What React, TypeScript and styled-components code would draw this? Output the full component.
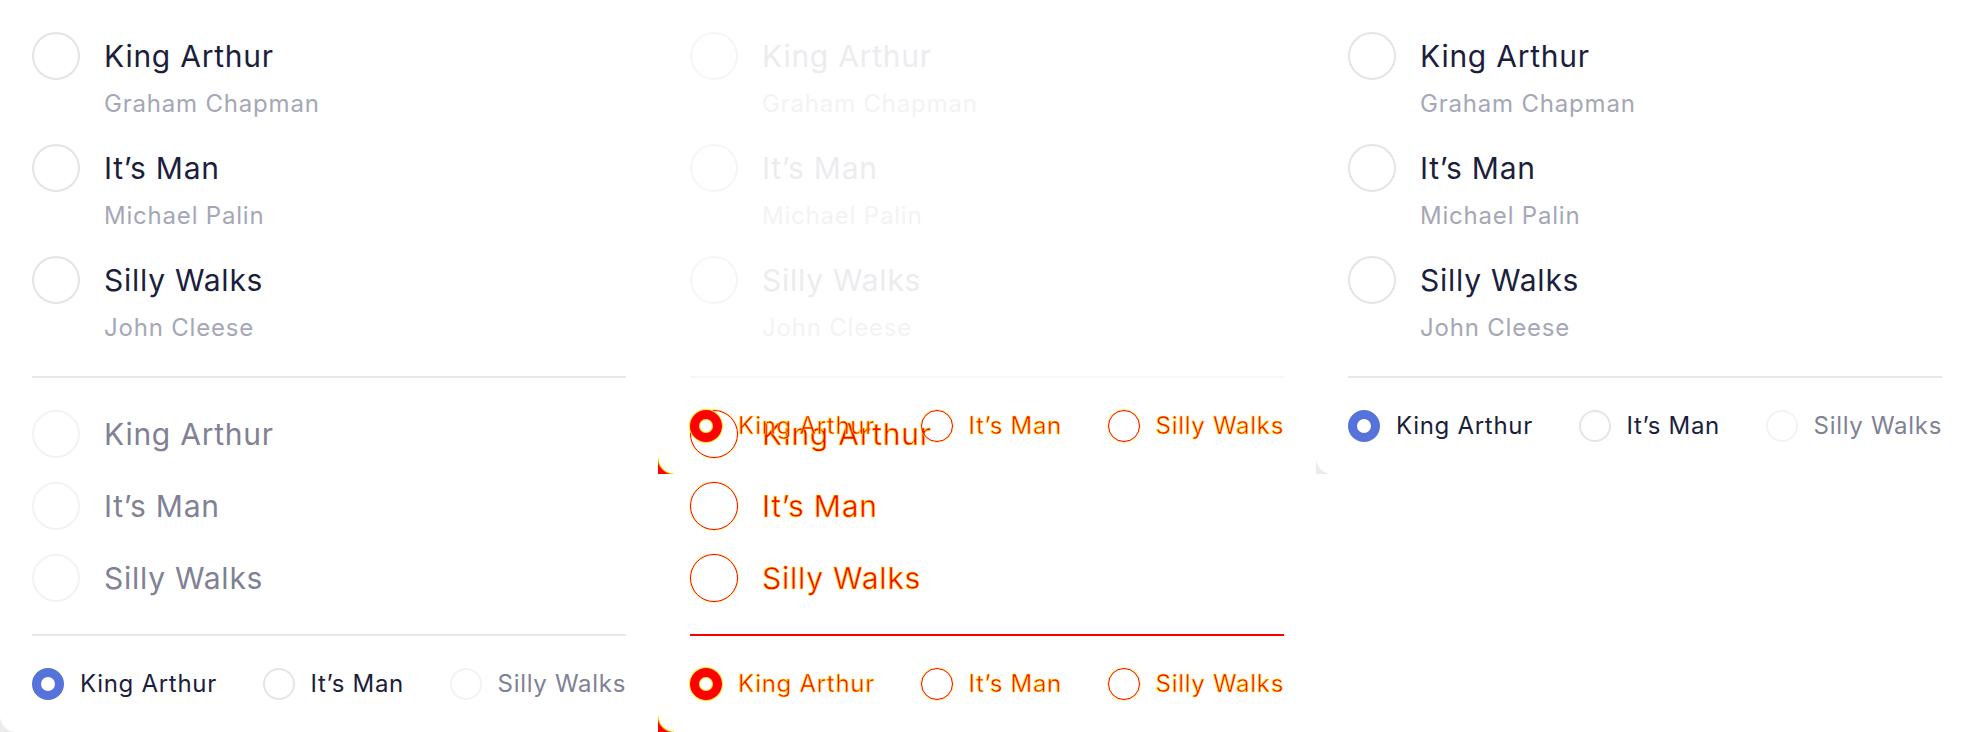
import React from "react";
import styled, { createGlobalStyle, css } from "styled-components";

type Tone = "normal" | "ghost" | "diff" | "hidden";
type State = "off" | "on" | "dis";

const GlobalStyle = createGlobalStyle`
  html, body { margin: 0; padding: 0; background: #ffffff; }
  body { font-family: Inter, "Noto Sans", sans-serif; }
  * { box-sizing: border-box; }
`;

const RED = "#ff0000";
const YELLOW = "#ffee00";

const palette = {
  normal: {
    title: "#1b1e3c",
    desc: "#a5a7b7",
    muted: "#7f8195",
    ring: "#e5e5e8",
    ringDis: "#f3f3f5",
    on: "#5672db",
    sep: "#e7e7ea",
  },
  ghost: {
    title: "#ececef",
    desc: "#f3f3f5",
    muted: "#ececef",
    ring: "#f6f6f7",
    ringDis: "#fafafa",
    on: "#eef0fb",
    sep: "#f7f7f8",
  },
  diff: {
    title: RED,
    desc: RED,
    muted: RED,
    ring: RED,
    ringDis: RED,
    on: RED,
    sep: RED,
  },
  hidden: {
    title: "transparent",
    desc: "transparent",
    muted: "transparent",
    ring: "transparent",
    ringDis: "transparent",
    on: "transparent",
    sep: "transparent",
  },
};

const diffText = css`
  -webkit-text-stroke: 0.55px ${YELLOW};
`;

const Page = styled.div`
  display: grid;
  grid-template-columns: repeat(3, 658px);
  align-items: start;
  width: 1974px;
  height: 732px;
  overflow: hidden;
`;

const Shot = styled.div`
  background: #ebebed;
`;

const DiffShot = styled.div`
  display: grid;
  background: #ffffff;
  height: 732px;
  & > * {
    grid-area: 1 / 1;
  }
`;

const Card = styled.div<{ $layer?: boolean }>`
  display: flex;
  flex-direction: column;
  background: ${(p) => (p.$layer ? "transparent" : "#ffffff")};
  border-bottom-left-radius: 16px;
  padding: ${(p) => (p.$layer ? "32px 32px 0" : "32px")};
`;

const Stack = styled.div<{ $gap: number }>`
  display: flex;
  flex-direction: column;
  gap: ${(p) => p.$gap}px;
`;

const Row = styled.div`
  display: flex;
  align-items: flex-start;
  gap: 24px;
`;

const Texts = styled.div`
  display: flex;
  flex-direction: column;
  gap: 8px;
`;

const Title = styled.span<{ $tone: Tone; $muted?: boolean }>`
  font-size: 30px;
  line-height: 48px;
  font-weight: 400;
  letter-spacing: 0.75px;
  white-space: nowrap;
  color: ${(p) => (p.$muted ? palette[p.$tone].muted : palette[p.$tone].title)};
  ${(p) => p.$tone === "diff" && diffText}
`;

const Desc = styled.span<{ $tone: Tone }>`
  font-size: 24px;
  line-height: 32px;
  letter-spacing: 0.8px;
  white-space: nowrap;
  color: ${(p) => palette[p.$tone].desc};
`;

const Circle = styled.span<{ $size: number; $state: State; $tone: Tone }>`
  flex: none;
  display: block;
  width: ${(p) => p.$size}px;
  height: ${(p) => p.$size}px;
  border-radius: 50%;
  background: ${(p) => (p.$tone === "diff" || p.$tone === "hidden" ? "transparent" : "#ffffff")};
  ${(p) => {
    const c = palette[p.$tone];
    if (p.$state === "on") {
      return css`
        border: 9px solid ${c.on};
        ${p.$tone === "diff" &&
        css`
          box-shadow: 0 0 0 1px ${YELLOW}, inset 0 0 0 1px ${YELLOW};
        `}
      `;
    }
    if (p.$tone === "diff") {
      return css`
        border: 1.5px solid ${RED};
        box-shadow: 0 0 0 0.5px ${YELLOW};
      `;
    }
    return css`
      border: 2px solid ${p.$state === "dis" ? c.ringDis : c.ring};
    `;
  }}
`;

const Separator = styled.div<{ $tone: Tone }>`
  height: 2px;
  margin: 32px 0;
  background: ${(p) => palette[p.$tone].sep};
`;

const InlineGroup = styled.div`
  display: flex;
  justify-content: space-between;
  align-items: center;
`;

const InlineItem = styled.label`
  display: flex;
  align-items: center;
  gap: 16px;
`;

const InlineText = styled.span<{ $tone: Tone; $muted?: boolean }>`
  font-size: 24px;
  line-height: 32px;
  letter-spacing: 0.7px;
  white-space: nowrap;
  color: ${(p) => (p.$muted ? palette[p.$tone].muted : palette[p.$tone].title)};
  ${(p) => p.$tone === "diff" && diffText}
`;

const CornerMark = styled.div`
  width: 16px;
  height: 16px;
  margin: 16px 0 0 -32px;
  background: radial-gradient(
    circle at 100% 0,
    transparent 15px,
    ${YELLOW} 15.6px,
    ${RED} 17px
  );
`;

const people = [
  { title: "King Arthur", desc: "Graham Chapman" },
  { title: "It’s Man", desc: "Michael Palin" },
  { title: "Silly Walks", desc: "John Cleese" },
];

function DescribedList({ tone }: { tone: Tone }) {
  return (
    <Stack $gap={24}>
      {people.map((p) => (
        <Row key={p.title}>
          <Circle $size={48} $state="off" $tone={tone} />
          <Texts>
            <Title $tone={tone}>{p.title}</Title>
            <Desc $tone={tone}>{p.desc}</Desc>
          </Texts>
        </Row>
      ))}
    </Stack>
  );
}

function DisabledList({ tone }: { tone: Tone }) {
  return (
    <Stack $gap={24}>
      {people.map((p) => (
        <Row key={p.title}>
          <Circle $size={48} $state="dis" $tone={tone} />
          <Title $tone={tone} $muted>
            {p.title}
          </Title>
        </Row>
      ))}
    </Stack>
  );
}

function InlineRadios({ tone }: { tone: Tone }) {
  return (
    <InlineGroup>
      <InlineItem>
        <Circle $size={32} $state="on" $tone={tone} />
        <InlineText $tone={tone}>King Arthur</InlineText>
      </InlineItem>
      <InlineItem>
        <Circle $size={32} $state="off" $tone={tone} />
        <InlineText $tone={tone}>It’s Man</InlineText>
      </InlineItem>
      <InlineItem>
        <Circle $size={32} $state="dis" $tone={tone} />
        <InlineText $tone={tone} $muted>
          Silly Walks
        </InlineText>
      </InlineItem>
    </InlineGroup>
  );
}

export default function App() {
  return (
    <>
      <GlobalStyle />
      <Page>
        <Shot>
          <Card>
            <DescribedList tone="normal" />
            <Separator $tone="normal" />
            <DisabledList tone="normal" />
            <Separator $tone="normal" />
            <InlineRadios tone="normal" />
          </Card>
        </Shot>

        <DiffShot>
          <Card $layer>
            <DescribedList tone="ghost" />
            <Separator $tone="ghost" />
            <DisabledList tone="diff" />
            <Separator $tone="diff" />
            <InlineRadios tone="diff" />
            <CornerMark />
          </Card>
          <Card $layer>
            <DescribedList tone="hidden" />
            <Separator $tone="hidden" />
            <InlineRadios tone="diff" />
            <CornerMark />
          </Card>
        </DiffShot>

        <Shot>
          <Card>
            <DescribedList tone="normal" />
            <Separator $tone="normal" />
            <InlineRadios tone="normal" />
          </Card>
        </Shot>
      </Page>
    </>
  );
}
